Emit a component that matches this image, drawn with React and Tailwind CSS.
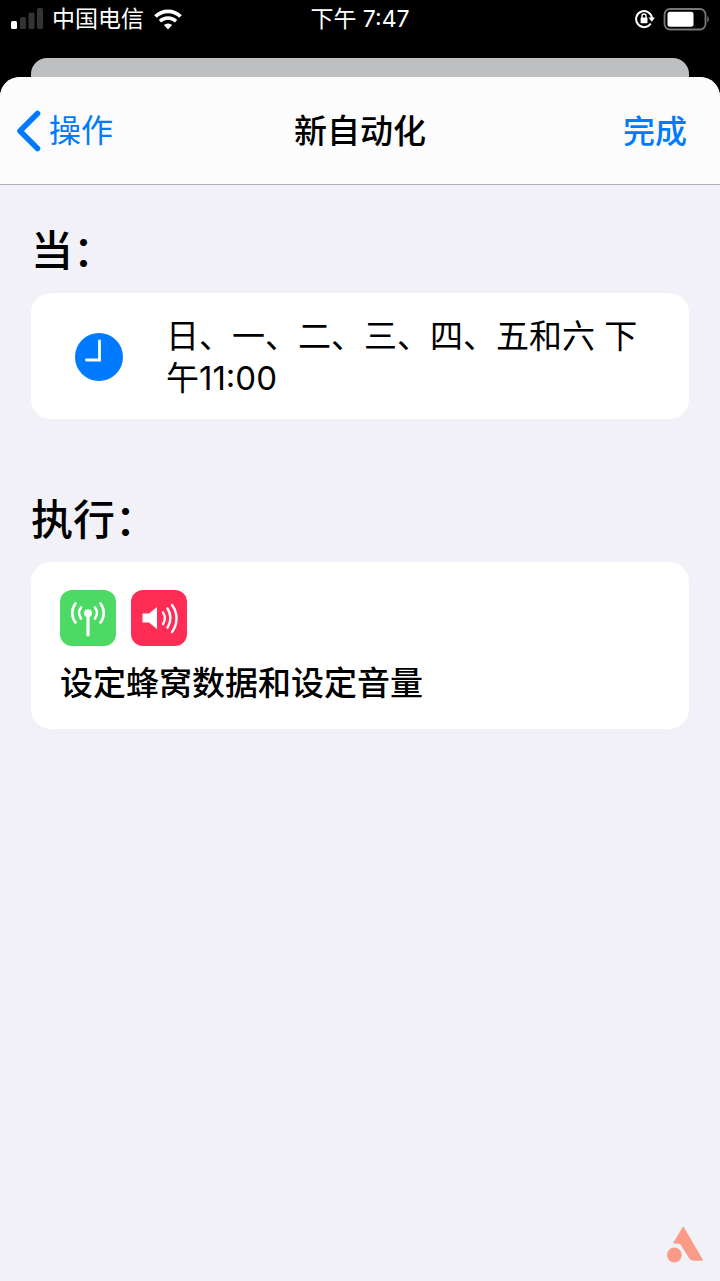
import React from "react";

const ACTIONS = [
  { id: "cellular", label: "设定蜂窝数据", tone: "bg-[#4cd964]", Icon: AntennaIcon },
  { id: "volume", label: "设定音量", tone: "bg-[#ff2d55]", Icon: SpeakerIcon },
];

function SignalIcon() {
  return (
    <svg width="33" height="22" viewBox="0 0 33 22" aria-hidden="true">
      <rect x="0" y="13" width="6" height="8" rx="1.5" fill="#fff" />
      <rect x="9" y="9" width="6" height="12" rx="1.5" fill="#333" />
      <rect x="17.500" y="4.500" width="6" height="16.500" rx="1.5" fill="#333" />
      <rect x="26" y="0" width="6" height="21" rx="1.5" fill="#333" />
    </svg>
  );
}

function WifiIcon() {
  return (
    <svg width="28" height="21" viewBox="0 0 28 21" aria-hidden="true">
      <path d="M1.5 7.5a17.7 17.7 0 0 1 25 0" fill="none" stroke="#fff" strokeWidth="3.8" />
      <path d="M6 12.3a11.4 11.4 0 0 1 16 0" fill="none" stroke="#fff" strokeWidth="3.4" />
      <path d="M14 20.5l-4.2-4.4a6 6 0 0 1 8.4 0z" fill="#fff" />
    </svg>
  );
}

function RotationLockIcon() {
  return (
    <svg width="20" height="20" viewBox="0 0 20 20" aria-hidden="true">
      <path
        d="M15.3 15.2a8 8 0 1 1 1.7-6.4"
        fill="none"
        stroke="#fff"
        strokeWidth="2"
        strokeLinecap="round"
      />
      <path d="M13.4 8.4h6.600l-3.200 4.300z" fill="#fff" />
      <rect x="5.600" y="8.600" width="6.900" height="5.600" rx="0.8" fill="#fff" />
      <path d="M7 9V7a2 2 0 0 1 4 0v2" fill="none" stroke="#fff" strokeWidth="1.4" />
    </svg>
  );
}

function BatteryIcon() {
  return (
    <svg width="46" height="23" viewBox="0 0 46 23" aria-hidden="true">
      <rect x="1.500" y="1" width="41" height="20.5" rx="5.5" fill="none" stroke="#777" strokeWidth="1.8" />
      <rect x="4.500" y="3.800" width="26" height="14.900" rx="2.500" fill="#fff" />
      <path d="M44.300 8c2 1 2 5.600 0 6.600z" fill="#777" />
    </svg>
  );
}

function ClockIcon() {
  return (
    <svg width="48" height="48" viewBox="0 0 48 48" aria-hidden="true">
      <circle cx="24" cy="24" r="24" fill="#007aff" />
      <path d="M24.500 8v19H11.500" fill="none" stroke="#fff" strokeWidth="2.800" strokeLinecap="round" />
    </svg>
  );
}

function AntennaIcon() {
  return (
    <svg width="56" height="56" viewBox="0 0 56 56" aria-hidden="true">
      <g fill="none" stroke="#fff" strokeWidth="2.700" strokeLinecap="round">
        <path d="M28 24v21" strokeWidth="3.200" />
        <path d="M21 17.500a9 9 0 0 0 0 11M35 17.500a9 9 0 0 1 0 11" />
        <path d="M15.500 13.500a15.500 15.500 0 0 0 0 19M40.500 13.500a15.500 15.500 0 0 1 0 19" />
      </g>
      <circle cx="28" cy="23.300" r="4" fill="#fff" />
    </svg>
  );
}

function SpeakerIcon() {
  return (
    <svg width="56" height="56" viewBox="0 0 56 56" aria-hidden="true">
      <path d="M11.500 23.500h6.500l8-6.500v22l-8-6.500h-6.500z" fill="#fff" />
      <g fill="none" stroke="#fff" strokeWidth="2.400" strokeLinecap="round">
        <path d="M32 22.500a10.500 10.500 0 0 1 0 11.500" />
        <path d="M36.500 18.500a17 17 0 0 1 0 19" />
        <path d="M41 15a22.500 22.500 0 0 1 0 27" />
      </g>
    </svg>
  );
}

function WatermarkLogo() {
  return (
    <svg width="36" height="37" viewBox="0 0 36 37" aria-hidden="true">
      <path
        d="M16.300 0.300L35.700 33.500q.4 1-.7 1.200H27.500c-3 0-4.500-1-6-3.500L14.500 20c-1-1.600-2-2.400-4-2.400H7c-.8 0-.9-.6-.6-1.200z"
        fill="#fb9a87"
      />
      <circle cx="7.400" cy="29" r="7.400" fill="#fb9a87" />
    </svg>
  );
}

function StatusBar() {
  return (
    <div className="grid h-[38px] grid-cols-3 items-center px-[11px] text-[23px] leading-none text-white">
      <div className="flex items-center gap-2">
        <SignalIcon />
        <span className="whitespace-nowrap">中国电信</span>
        <span className="pl-0.5">
          <WifiIcon />
        </span>
      </div>
      <time className="text-center">下午 7:47</time>
      <div className="flex items-center justify-end gap-2">
        <RotationLockIcon />
        <BatteryIcon />
      </div>
    </div>
  );
}

function NavBar() {
  return (
    <header className="grid h-[108px] grid-cols-3 items-center rounded-t-[20px] border-b border-[#b2b2b4] bg-[#fcfcfd] px-4 text-[32px] leading-none">
      <button type="button" className="flex items-center gap-2 justify-self-start text-[#007aff]">
        <svg width="25" height="42" viewBox="0 0 25 42" aria-hidden="true">
          <path
            d="M21.500 3.500L4 21l17.500 17.500"
            fill="none"
            stroke="currentColor"
            strokeWidth="5.600"
            strokeLinecap="round"
            strokeLinejoin="round"
          />
        </svg>
        操作
      </button>
      <h1 className="pt-0.5 text-center text-[33px] font-medium">新自动化</h1>
      <button type="button" className="justify-self-end pt-0.5 pr-[17px] font-medium text-[#007aff]">
        完成
      </button>
    </header>
  );
}

function Section({ title, children }) {
  return (
    <section>
      <h2 className="pt-0.5 pb-[18px] text-[42px] leading-[48px] font-medium">{title}</h2>
      {children}
    </section>
  );
}

export default function App() {
  return (
    <div className="flex min-h-screen flex-col bg-black font-['Inter','Noto_Sans_CJK_SC',sans-serif] text-black">
      <StatusBar />
      <div className="mx-[31px] mt-5 h-[19px] rounded-t-2xl bg-[#bebfc1]" />
      <div className="flex grow flex-col rounded-t-[20px] bg-[#f2f1f7]">
        <NavBar />
        <main className="flex grow flex-col gap-[75px] px-[31px] pt-10">
          <Section title="当：">
            <button
              type="button"
              className="flex w-full items-center gap-[43px] rounded-[20px] bg-white pt-[22px] pb-5 pr-6 pl-11 text-left text-[33px] leading-[42px]"
            >
              <span className="shrink-0">
                <ClockIcon />
              </span>
              <span>日、一、二、三、四、五和六 下午11:00</span>
            </button>
          </Section>
          <Section title="执行：">
            <button
              type="button"
              className="flex w-full flex-col gap-4 rounded-[20px] bg-white px-[29px] pt-7 pb-[25px] text-left text-[33px] leading-[42px] font-medium"
            >
              <span className="flex gap-[15px]">
                {ACTIONS.map(({ id, tone, Icon }) => (
                  <span key={id} className={`overflow-hidden rounded-xl ${tone}`}>
                    <Icon />
                  </span>
                ))}
              </span>
              <span>{ACTIONS.map((a) => a.label).join("和")}</span>
            </button>
          </Section>
        </main>
      </div>
      <div className="fixed right-[17px] bottom-[18px]">
        <WatermarkLogo />
      </div>
    </div>
  );
}
